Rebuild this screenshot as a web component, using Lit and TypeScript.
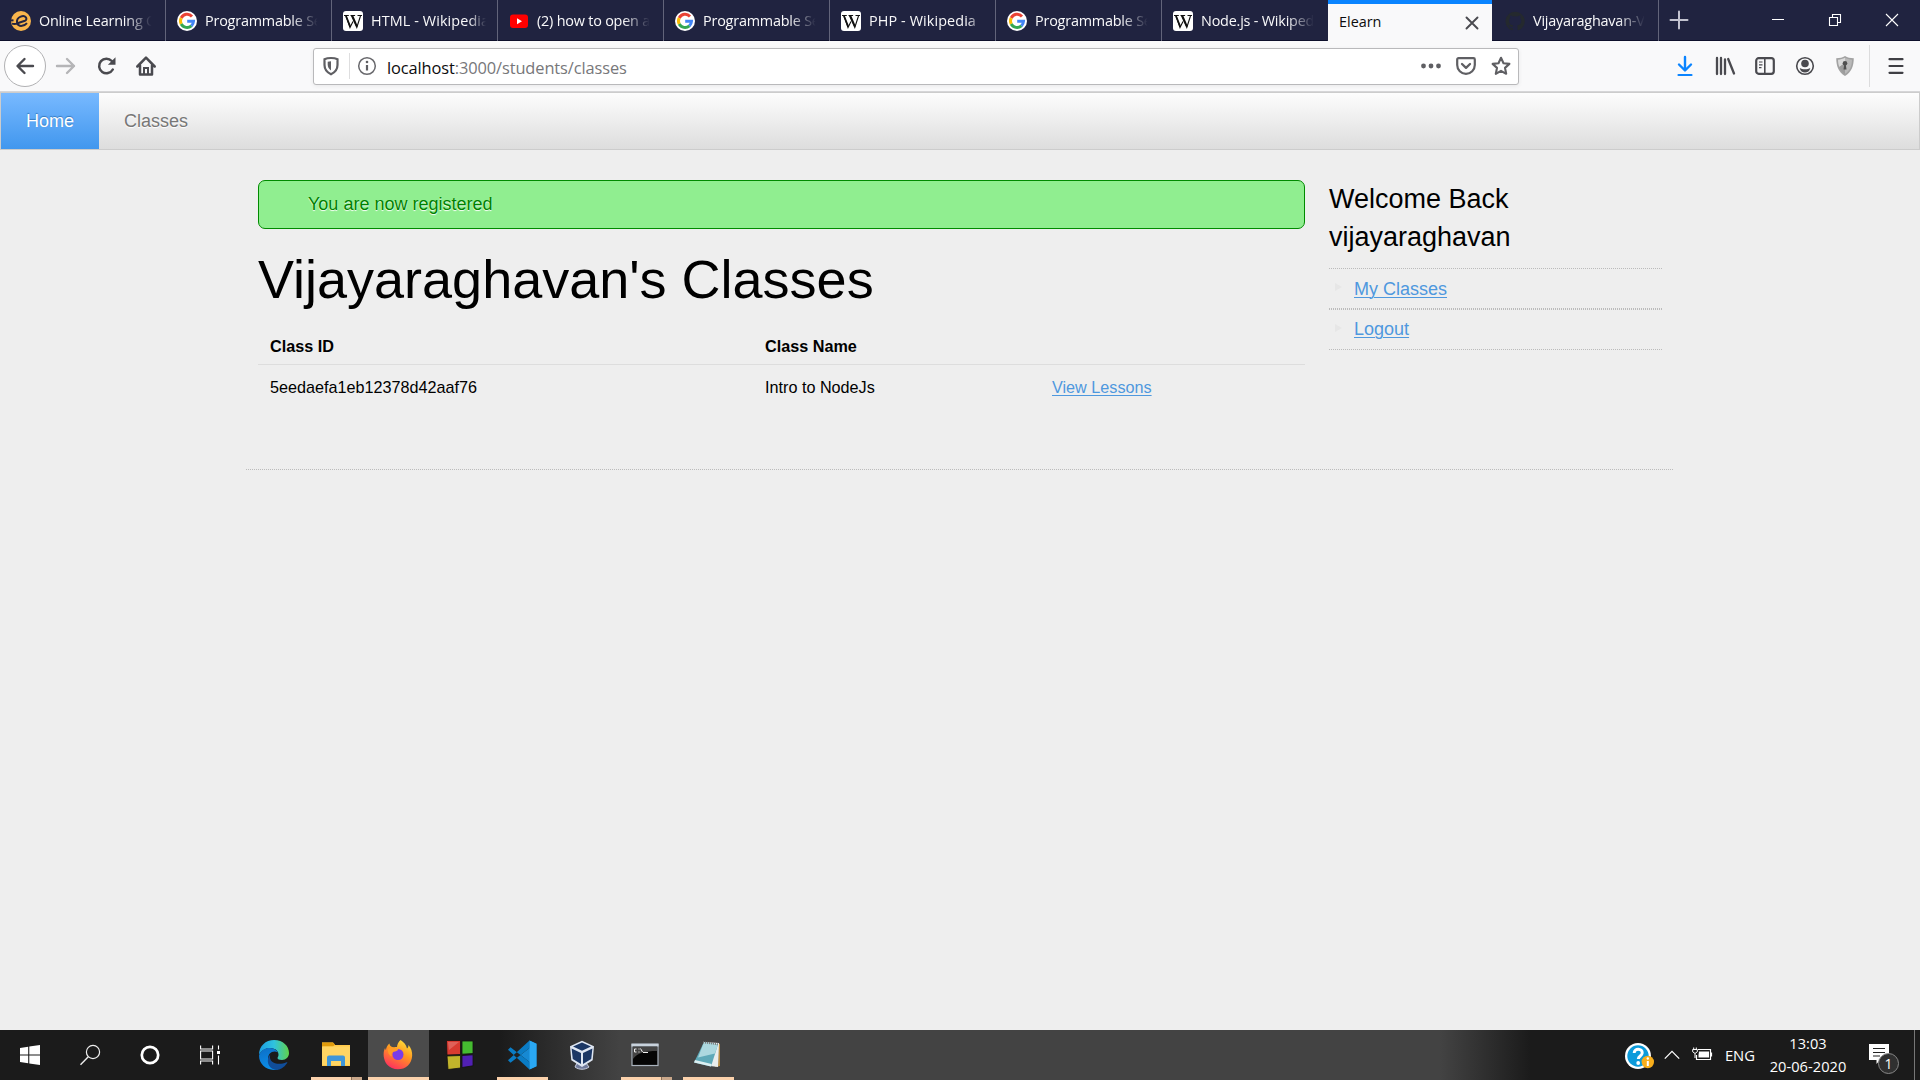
import { LitElement, html, css, svg, nothing } from "lit";
import { customElement } from "lit/decorators.js";

type Tab = { icon: string; label: string; cls?: string };

const tabs: Tab[] = [
  { icon: "edu", label: "Online Learning C" },
  { icon: "google", label: "Programmable Se" },
  { icon: "wiki", label: "HTML - Wikipedia", cls: "wide" },
  { icon: "youtube", label: "(2) how to open a" },
  { icon: "google", label: "Programmable Se" },
  { icon: "wiki", label: "PHP - Wikipedia", cls: "wide" },
  { icon: "google", label: "Programmable Se" },
  { icon: "wiki", label: "Node.js - Wikiped", cls: "before" },
  { icon: "", label: "Elearn", cls: "active" },
  { icon: "github", label: "Vijayaraghavan-V", cls: "after" },
];

const icons: Record<string, unknown> = {
  edu: svg`<circle cx="10" cy="10" r="10" fill="#f9b54c"/><path d="M0 9.600L2.500 9.200M1 12.600c2 .6 3.800.4 5.500-.3l7.500-2.600c1.600-.6 1.700-2.200.9-3.300-1-1.300-3.200-1.600-5.200-.8C7.200 6.600 5.700 8.900 6 11.300c.3 2.600 2.500 3.900 5 3.500 2-.3 3.700-1.200 5-2.700" fill="none" stroke="#23233f" stroke-width="2"/>`,
  google: svg`<circle cx="10" cy="10" r="10" fill="#fff"/><g fill="none" stroke-width="3"><path d="M15 5.400A6.600 6.600 0 0 0 4.200 7" stroke="#ea4335"/><path d="M4.200 7a6.600 6.600 0 0 0 0 6" stroke="#fbbc05"/><path d="M4.200 13A6.600 6.600 0 0 0 14.400 14.800" stroke="#34a853"/><path d="M14.400 14.800a6.500 6.500 0 0 0 2.100-4.500H10.200" stroke="#4285f4"/></g>`,
  wiki: svg`<rect width="20" height="20" rx="3" fill="#fff"/><path d="M1 4.500h4.800M7.500 4.500h4.600M14.500 4.500H19M10 10.500l-3 6L3 5M8.500 4.800l5.300 11.700L17.500 5" fill="none" stroke="#111" stroke-width="1.100"/><path d="M3 5l4.200 10.500M9.500 5l4.500 10.500" stroke="#111" stroke-width="1.800"/>`,
  youtube: svg`<rect x="1" y="3.500" width="18" height="13.500" rx="3" fill="#f00"/><path d="M8 7.300v6l5-3z" fill="#fff"/>`,
  github: svg`<path d="M10 .8a9.500 9.500 0 0 0-3 18.500c.5.1.7-.2.7-.5v-1.700c-2.700.6-3.200-1.200-3.200-1.200-.5-1.100-1.100-1.400-1.100-1.400-.9-.6.1-.6.1-.6 1 .1 1.500 1 1.500 1 .9 1.500 2.300 1.100 2.800.8.100-.6.300-1.100.6-1.300-2.100-.3-4.300-1.100-4.300-4.700 0-1 .4-1.900 1-2.600-.1-.2-.4-1.200.1-2.500 0 0 .8-.3 2.600 1a9 9 0 0 1 4.800 0c1.800-1.300 2.600-1 2.600-1 .5 1.300.2 2.300.1 2.500.6.700 1 1.600 1 2.600 0 3.700-2.200 4.400-4.300 4.700.3.300.6.900.6 1.800v2.600c0 .3.200.6.700.5A9.500 9.500 0 0 0 10 .8z" fill="#24292e"/>`,
  back: svg`<path d="M18 10H3M9.500 3l-7 7 7 7" fill="none" stroke="#4a4a4f" stroke-width="2.400" stroke-linecap="round" stroke-linejoin="round"/>`,
  forward: svg`<path d="M1 10h17M11 3l7 7-7 7" fill="none" stroke="#b5b5b7" stroke-width="2.400" stroke-linecap="round" stroke-linejoin="round"/>`,
  reload: svg`<path d="M16.800 13.500A7.300 7.300 0 1 1 15.800 5" fill="none" stroke="#4a4a4f" stroke-width="2.500" stroke-linecap="round"/><path d="M19.500 1.200v7.600h-7.600z" fill="#4a4a4f"/>`,
  home: svg`<path d="M1.300 10.500L10 1.700l8.700 8.800M4 9.500V18.500h12V9.500" fill="none" stroke="#4a4a4f" stroke-width="2.500" stroke-linecap="round" stroke-linejoin="round"/><path d="M8 18v-6h4v6" fill="none" stroke="#4a4a4f" stroke-width="2"/>`,
  shield: svg`<path d="M10 2c2.500 0 5 .5 6.500 1.200V9c0 4-2.500 7.300-6.500 9.200C6 16.300 3.500 13 3.500 9V3.200C5 2.500 7.500 2 10 2z" fill="none" stroke="#5f5f63" stroke-width="2.200"/><path d="M10 5.200v9.300c-2-1.500-3.300-3.400-3.300-6V5.700z" fill="#5f5f63"/>`,
  info: svg`<circle cx="10" cy="10" r="8.300" fill="none" stroke="#69696d" stroke-width="1.500"/><path d="M10 9v5.500" stroke="#5f5f63" stroke-width="2.200"/><circle cx="10" cy="6" r="1.300" fill="#5f5f63"/>`,
  dots: svg`<g fill="#5f5f63"><circle cx="2.500" cy="10" r="2.400"/><circle cx="10" cy="10" r="2.400"/><circle cx="17.500" cy="10" r="2.400"/></g>`,
  pocket: svg`<path d="M2.500 2.200h15a1.300 1.300 0 0 1 1.300 1.300V9a8.800 8.800 0 0 1-17.600 0V3.500a1.300 1.300 0 0 1 1.300-1.300z" fill="none" stroke="#5f5f63" stroke-width="2.200"/><path d="M6 8l4 3.900L14 8" fill="none" stroke="#5f5f63" stroke-width="2.300" stroke-linecap="round" stroke-linejoin="round"/>`,
  star: svg`<path d="M10 1.800l2.500 5.400 5.900.7-4.400 4 1.200 5.900-5.200-3-5.200 3L6 11.900 1.600 7.900l5.900-.7z" fill="none" stroke="#5f5f63" stroke-width="2.100" stroke-linejoin="round"/>`,
  download: svg`<path d="M10 1v13M4 8.500l6 6 6-6" fill="none" stroke="#0a84ff" stroke-width="2.400" stroke-linecap="round" stroke-linejoin="round"/><path d="M3.500 19h13" stroke="#0a84ff" stroke-width="2.200" stroke-linecap="round"/>`,
  library: svg`<path d="M2 2v16M6 2v16M10 3.500v14.500M13.200 3L19 17.500" fill="none" stroke="#4a4a4f" stroke-width="2.300" stroke-linecap="round"/>`,
  sidebar: svg`<rect x="1.200" y="2.200" width="17.600" height="15.600" rx="2.500" fill="none" stroke="#4a4a4f" stroke-width="2.200"/><path d="M9.800 2v16" stroke="#4a4a4f" stroke-width="1.600"/><path d="M4 6h3.500M4 8.800h3.500M4 11.600h2.500" stroke="#4a4a4f" stroke-width="1.200"/>`,
  account: svg`<circle cx="10" cy="10" r="8.300" fill="none" stroke="#4a4a4f" stroke-width="1.600"/><circle cx="10" cy="7.500" r="3.800" fill="#4a4a4f"/><path d="M4.700 12c1.500 1 3 1.300 5.300 1.300s3.800-.3 5.300-1.300c-.5 3-2.800 4.500-5.300 4.500S5.200 15 4.700 12z" fill="#4a4a4f"/>`,
  guard: svg`<path d="M10 0c2.500 1.500 5 2.200 8.800 2.300-.2 8.500-2.300 13.700-8.800 17.700C3.500 16 1.400 10.800 1.200 2.300 5 2.200 7.500 1.500 10 0z" fill="#a2a2a2"/><path d="M10 1.800c2.200 1.200 4.300 1.700 7 1.900-.3 6.800-2.100 11-7 14.100z" fill="#b9b9b9"/><path d="M10 1.800C7.800 3 5.700 3.500 3 3.700c.1 2.800.5 5.200 1.300 7.200L10 7z" fill="#dadada"/><path d="M4.300 10.900c1 2.900 2.900 5.100 5.700 6.900V7z" fill="#9c9c9c"/><circle cx="10" cy="7.300" r="2.300" fill="#505050"/><path d="M9.200 8.500h1.600l.7 5H8.500z" fill="#505050"/>`,
  menu: svg`<path d="M3.500 3.200h13M3.500 10h13M3.500 16.800h13" stroke="#3f3f44" stroke-width="2.200" stroke-linecap="round"/>`,
  close: svg`<path d="M4.500 4.500l11 11M15.500 4.500l-11 11" stroke="#4a4a4f" stroke-width="1.900" stroke-linecap="round"/>`,
  plus: svg`<path d="M10 1.500v17M1.500 10h17" stroke="#c2c2cf" stroke-width="2" stroke-linecap="round"/>`,
  min: svg`<path d="M4 9.500h12" stroke="#fff" stroke-width="1"/>`,
  restore: svg`<path d="M4.500 7.500h8v8h-8zM7.500 7.500v-3h8v8h-3" fill="none" stroke="#fff" stroke-width="1.100"/>`,
  quit: svg`<path d="M4 4l12 12M16 4L4 16" stroke="#fff" stroke-width="1.100"/>`,
  windows: svg`<path d="M0 3l8.200-1.200v7.700H0zM9.300 1.600L20 0v9.500H9.300zM0 10.600h8.200v7.700L0 17.100zM9.300 10.600H20V20L9.300 18.500z" fill="#fff"/>`,
  search: svg`<circle cx="13" cy="7" r="6.600" fill="none" stroke="#eee" stroke-width="1.200"/><path d="M8.300 11.700L.5 19.700" stroke="#eee" stroke-width="1.400"/>`,
  cortana: svg`<circle cx="10" cy="10" r="8.200" fill="none" stroke="#fff" stroke-width="2.700"/>`,
  tasks: svg`<path d="M.6.500v3.500h12V.5M.6 6h12v8H.6zM.6 19.500V16h12v3.500M18.500.5v4M18.500 10.500v9" fill="none" stroke="#fff" stroke-width="1.100"/><rect x="17" y="6" width="3" height="3" fill="#fff"/>`,
  edge: svg`<defs><linearGradient id="eg" x2="1"><stop stop-color="#1b9de2"/><stop offset=".5" stop-color="#2fc2df"/><stop offset="1" stop-color="#60d34a"/></linearGradient><linearGradient id="eb" x2=".3" y2="1"><stop stop-color="#0d6ec5"/><stop offset="1" stop-color="#0b8de8"/></linearGradient></defs><path d="M0 15C0 6 6.500 0 15.200 0 24 0 30 6 30 13c0 4-3 7-7 7-3 0-4.500-.8-4.500-2 0-.8 1-1.300 1-3.300C19.500 10 15 8 11 8 6 8 2 11 0 15z" fill="url(#eg)"/><path d="M0 15.500C2 10 6.500 7.800 11 8c3.500.1 6.500 1.700 7.800 4.300-5-2.600-10 1.200-9.500 6.200.5 5.500 5 9.500 10 10.800C9 32 0 25 0 15.500z" fill="url(#eb)"/><path d="M11.200 14.500C9 23 19 26 27.500 22.300c1-.4 1 .3.500 1C24 29 19 31 15 29.500c-5.700-2-8.500-9-3.800-15z" fill="#104d99"/>`,
  folder: svg`<path d="M1 5V2.500h11L14 5h15v21H1z" fill="#ffc94a"/><path d="M1 6.500V2.500h11l2 2-2 2z" fill="#e09b0c"/><rect x="1" y="6.500" width="28" height="18.500" rx="1" fill="#ffd563"/><path d="M6 26V17.500a2 2 0 0 1 2-2h14a2 2 0 0 1 2 2V26h-4v-5h-10v5z" fill="#3f96d8"/>`,
  firefox: svg`<defs><linearGradient id="ff" x1=".8" x2=".3" y2="1"><stop stop-color="#ffe63b"/><stop offset=".45" stop-color="#ff9620"/><stop offset="1" stop-color="#ff2d61"/></linearGradient></defs><path d="M17.500 0c5 3.200 6 6.500 6.500 8.500 1.200-.8 1.500-2.300 1.500-3.500C31 11 30 21 25 25.500c-6 5.500-16 5-21-1C.5 20-.5 13 2 8c.5 1 .5 1.700 1 2C3 7.500 4.500 5 6.500 3.500c0 2 1.500 3.500 3.500 3.800 2.200 0 3-.2 4-.2C14 4.500 15.500 2 17.500 0z" fill="url(#ff)"/><circle cx="15" cy="14.500" r="5.500" fill="#7a3ce8"/><path d="M5 9c2-2 5-2 9-.5 2 1 1 2-2 3-3.500.8-4 2.500-3 5-3-1-4.500-4-4-7.500z" fill="#ff9a28"/>`,
  blocks: svg`<g stroke="#111" stroke-width=".8"><path d="M1.500.5h14v14l-13.500.5z" fill="#d83a30"/><path d="M17 1h11v12.500l-11 .7z" fill="#45bb30"/><path d="M2 16l13.500-.5V28L3 29.500z" fill="#c1b42b"/><path d="M17 15.500l11-.7v11L17 27.500z" fill="#5120b4"/></g><path d="M3 2h11L4 10z" fill="#fff" opacity=".2"/>`,
  code: svg`<path d="M22.500.5l7 3.300v22.400l-7 3.300V22l-9-7 9-7z" fill="#1689d3"/><path d="M1 20.200l2.500 2.500L22.500 8V.5zM1 9.800l2.500-2.500L22.500 22v7.500z" fill="#0a7cc5"/><path d="M22.500.5l7 3.300v22.400l-7 3.300z" fill="#2aa8f4"/>`,
  vbox: svg`<path d="M10 23l-2 4c4 3 10 3 14 0l-3-4z" fill="#707b9c" stroke="#c9cfe0"/><path d="M15 .8l12 5.400-1.300 14L15 27 4.300 20.200 3 6.200z" fill="#dfe7f3"/><path d="M15 2.500l9 4-9 4.300-9-4.300zM4.600 8.500l9.400 4.600v11l-8.200-5.200zM25.400 8.500L16 13.100v11l8.200-5.200z" fill="#1b3765"/>`,
  terminal: svg`<rect x="2" y="4" width="26" height="21.500" fill="#050505" stroke="#aab3bd" stroke-width="1.200"/><path d="M1.500 5.200h27" stroke="#c8d2dc" stroke-width="2.600"/><path d="M3 7h24v4C15 11 7 13 3 19z" fill="#444"/><path d="M6.500 9h-2v3h2M8.500 9h1M8.500 12h1M10.500 8.500l2 3.500M13 12.500h5" stroke="#eee" fill="none"/>`,
  notepad: svg`<path d="M25 3l3 1v22l-5 1z" fill="#b48a45"/><path d="M12 2l15 1-1 24-8-1z" fill="#e9eded"/><path d="M12 2l14 2.500-7 22L2 22.500z" fill="#5ea9b8"/><path d="M12 2l14 2.500-3 9-17 4z" fill="#acd8df"/><path d="M2 22.500l17 4 .7-2.500L3 20z" fill="#dbeff2"/><path d="M11 2.300l15 2" stroke="#777" stroke-width="2" stroke-dasharray="1 1"/>`,
  help: svg`<circle cx="13" cy="13" r="13" fill="#fff"/><circle cx="13" cy="13" r="10.700" fill="#0c9bdb"/><path d="M9.200 10c0-5.300 8.300-4.800 8 0-.2 3-3.700 3-3.900 6" fill="none" stroke="#fff" stroke-width="3"/><circle cx="13.200" cy="20" r="1.900" fill="#fff"/><circle cx="22.800" cy="19" r="6.200" fill="#f8ae1b"/><path d="M22.800 18v5" stroke="#fff" stroke-width="2"/><circle cx="22.800" cy="15.500" r="1.200" fill="#fff"/>`,
  up: svg`<path d="M2 14l8-8 8 8" fill="none" stroke="#fff" stroke-width="1.400"/>`,
  battery: svg`<path d="M6 4.500h12.500v10H4.500V10M19.500 7.500v4" fill="none" stroke="#fff" stroke-width="1.200"/><path d="M7 6.500h10v6H6.500V10z" fill="#fff"/><path d="M.7 4.500h4.600v2.300L3 8.500.7 6.800zM1.700 4.500v-2M4.300 4.500v-2M3 8.500v4.500" fill="none" stroke="#fff"/>`,
  action: svg`<path d="M0 0h20v16H11l-3.500 4v-4H0z" fill="#fff"/><path d="M4 4.500h12M4 8.500h12M4 12h7" stroke="#222" stroke-width="1.200"/>`,
};

const icon = (name: string, size = 20, box = 20) =>
  html`<svg class="icon" width=${size} height=${size} viewBox="0 0 ${box} ${box}">${icons[name]}</svg>`;

@customElement("app-root")
export class AppRoot extends LitElement {
  static styles = css`
    :host { display: flex; flex-direction: column; height: 1080px; width: 1920px; overflow: hidden; background: #eee; color: #000; font: 18px/25px "Liberation Sans", Arial, sans-serif; }
    * { box-sizing: border-box; }
    .icon { display: block; flex: none; overflow: visible; }
    .tabs { display: flex; height: 41px; flex: none; background: #202340; border-bottom: 1px solid #0d0f2b; font: 14.5px/41px "Open Sans", "Noto Sans", sans-serif; color: #f9f9fa; }
    .tab { width: 166px; flex: none; height: 41px; display: flex; align-items: center; gap: 8px; padding: 1px 11px 0 11px; border-right: 1px solid #62647a; overflow: hidden; }
    .tab.before { border-color: #202340; }
    .tab.active { background: #f9f9fa; color: #0c0c0d; border-top: 4px solid #0a84ff; border-right: 0; width: 164px; padding-top: 0; padding-right: 10px; line-height: 33px; }
    .tab.after { width: 167px; padding-left: 13px; }
    .label { flex: 1; min-width: 0; white-space: nowrap; overflow: hidden; font-size: 14.4px; line-height: 38px; letter-spacing: -0.2px; -webkit-mask-image: linear-gradient(90deg, #000 75%, transparent 98%); }
    .wide .label { letter-spacing: 0.1px; -webkit-mask-image: linear-gradient(90deg, #000 85%, transparent 100%); }
    .active .label { letter-spacing: 0; line-height: 32px; padding-bottom: 2px; -webkit-mask-image: none; }
    .newtab { padding: 10px; }
    .winctl { margin-left: auto; display: flex; align-items: center; gap: 37px; padding-right: 18px; }
    .toolbar { display: flex; align-items: center; height: 51px; flex: none; background: #f9f9fa; border-bottom: 1px solid #d6d6d8; padding: 0 14px 0 4px; }
    .backbtn { width: 42px; height: 42px; border: 1px solid #b1b1b3; border-radius: 50%; background: #fff; display: grid; place-items: center; }
    .navicons { display: flex; gap: 20px; margin-left: 10px; }
    .url { margin-left: 157px; width: 1206px; height: 37px; border: 1px solid #b9b9bb; border-radius: 3px; background: #fff; box-shadow: 0 1px 4px rgba(0,0,0,.07); display: flex; align-items: center; padding: 0 7px 0 7px; }
    .vr { width: 1px; height: 26px; background: #dededf; margin: 0 7px 0 8px; }
    .addr { margin-left: 10px; font: 16.4px/34px "Open Sans", "Noto Sans", sans-serif; letter-spacing: -0.1px; color: #77777a; white-space: nowrap; padding-top: 3px; }
    .host { color: #0c0c0d; }
    .urlicons { display: flex; gap: 15px; margin-left: auto; }
    .actions { display: flex; align-items: center; gap: 20px; margin-left: auto; }
    .sep { width: 1px; height: 42px; background: #dcdcdd; margin: 0 -4px 0 -6px; }
    .menu { display: flex; height: 58px; flex: none; border: 1px solid #ccc; background: linear-gradient(#fdfdfd, #ddd); }
    .item { padding: 0 25px; line-height: 56px; color: #777; text-shadow: 0 1px 1px #fff; }
    .item.on { width: 98px; padding: 0 0 0 25px; color: #fff; background: linear-gradient(#78b9ff, #4197ee); text-shadow: 0 -1px 1px #3378bd; }
    .page { flex: 1; }
    .grid { width: 1427px; height: 320px; margin-left: 246px; padding: 30px 11px 0 12px; display: flex; gap: 24px; border-bottom: 1px dotted #bbb; }
    .main { width: 1047px; }
    .notice { height: 49px; border: 1px solid #008a00; border-radius: 7px; background: #90ee90; color: #008000; padding: 11px 49px; text-shadow: 0 1px 1px #fff; }
    .title { margin: 13px 0 0; font-size: 54px; line-height: 75px; font-weight: 400; }
    .table { width: 100%; margin-top: 9px; border-collapse: collapse; font-size: 16.2px; line-height: 20px; table-layout: fixed; }
    .table th, .table td { text-align: left; padding: 12px 12px 10px; }
    .table th { border-bottom: 1px solid #ddd; padding: 10px 12px 8px; }
    .c1 { width: 495px; } .c2 { width: 287px; }
    .link { color: #4e98de; text-decoration: underline; text-underline-offset: 2px; text-decoration-thickness: 1px; }
    .side { width: 333px; }
    .welcome { margin: 0 0 12px; font-size: 27px; line-height: 38px; font-weight: 400; }
    .list { list-style: none; margin: 0; padding: 0; }
    .entry { display: flex; align-items: center; height: 41px; border: dotted #bbb; border-width: 1px 0; padding-left: 6px; }
    .entry:first-child { padding-top: 1px; }
    .arrow { width: 0; height: 0; border: solid transparent; border-width: 4px 0 4px 7px; border-left-color: #e6e6e6; margin: -4px 12px 0 0; }
    .taskbar { display: flex; height: 50px; flex: none; color: #fff; font: 15px/23px "Open Sans", "Noto Sans", sans-serif; background: linear-gradient(90deg, #1b1b1b 0 500px, #434343 620px 1440px, #1b1b1b 1530px); }
    .start { display: flex; align-items: center; gap: 40px; padding: 0 0 0 20px; width: 243px; }
    .app { width: 62px; height: 50px; display: flex; justify-content: center; padding-top: 10px; border-bottom: 0 solid #fbd2ac; }
    .run { width: 51px; margin: 0 6px; padding-right: 1px; border-bottom-width: 3px; }
    .stack { border-image: linear-gradient(90deg, #fbd2ac 78%, #8a7059 78% 80%, #c9a78a 80%) 1; border-width: 0 0 3px; border-style: solid; }
    .app.on { width: 61px; padding-right: 2px; background: #4b4b4b; border-bottom-width: 3px; }
    .left { width: 61px; padding-right: 5px; }
    .last { margin-left: 5px; padding-right: 3px; }
    .term { padding-right: 3px; }
    .apps { display: flex; }
    .tray { margin-left: auto; display: flex; align-items: center; height: 50px; }
    .help { padding-top: 3px; }
    .up { margin-left: 10px; } .bat { margin-left: 11px; }
    .lang { margin-left: 13px; font-size: 14.8px; letter-spacing: -0.1px; width: 29px; }
    .clock { width: 80px; margin-left: 14px; text-align: center; font-size: 14.6px; letter-spacing: 0.05px; white-space: nowrap; }
    .center { position: relative; margin-left: 21px; padding-bottom: 2px; }
    .badge { position: absolute; left: 9px; top: 9px; width: 21px; height: 21px; border: 1px solid #888; border-radius: 50%; background: #303030; text-align: center; font-size: 14px; line-height: 19px; }
    .edge { width: 1px; height: 50px; background: #777; margin: 0 5px 0 25px; }
  `;

  render() {
    return html`
      <div class="tabs">
        ${tabs.map((t) => html`<div class="tab ${t.cls ?? ""}">
          ${t.icon ? icon(t.icon) : nothing}<span class="label">${t.label}</span>${t.cls === "active" ? icon("close") : nothing}</div>`)}
        <div class="newtab">${icon("plus")}</div>
        <div class="winctl">${icon("min")}${icon("restore")}${icon("quit")}</div>
      </div>
      <div class="toolbar">
        <div class="backbtn">${icon("back")}</div>
        <div class="navicons">${icon("forward")}${icon("reload")}${icon("home")}</div>
        <div class="url">${icon("shield")}<span class="vr"></span>${icon("info")}
          <span class="addr"><span class="host">localhost</span>:3000/students/classes</span>
          <div class="urlicons">${icon("dots")}${icon("pocket")}${icon("star")}</div>
        </div>
        <div class="actions">
          ${["download", "library", "sidebar", "account", "guard"].map((n) => icon(n))}
          <span class="sep"></span>${icon("menu")}
        </div>
      </div>
      <nav class="menu"><span class="item on">Home</span><span class="item">Classes</span></nav>
      <main class="page">
        <div class="grid">
          <section class="main">
            <div class="notice">You are now registered</div>
            <h1 class="title">Vijayaraghavan's Classes</h1>
            <table class="table">
              <tr><th class="c1">Class ID</th><th class="c2">Class Name</th><th></th></tr>
              <tr><td>5eedaefa1eb12378d42aaf76</td><td>Intro to NodeJs</td><td><a class="link">View Lessons</a></td></tr>
            </table>
          </section>
          <aside class="side">
            <h2 class="welcome">Welcome Back<br />vijayaraghavan</h2>
            <ul class="list">
              ${["My Classes", "Logout"].map((l) => html`<li class="entry"><span class="arrow"></span><a class="link">${l}</a></li>`)}
            </ul>
          </aside>
        </div>
      </main>
      <footer class="taskbar">
        <div class="start">${icon("windows")}${icon("search")}${icon("cortana")}${icon("tasks")}</div>
        <div class="apps">
          ${[["edge", ""], ["folder", "run stack"], ["firefox", "on"], ["blocks", ""], ["code", "run"], ["vbox", "left"], ["terminal", "run stack term"], ["notepad", "run last"]].map(
            ([n, c]) => html`<div class="app ${c}">${icon(n, 30, 30)}</div>`
          )}
        </div>
        <div class="tray">
          <span class="help">${icon("help", 28, 28)}</span>
          <span class="up">${icon("up", 18)}</span>
          <span class="bat">${icon("battery")}</span>
          <span class="lang">ENG</span>
          <div class="clock">13:03<br />20-06-2020</div>
          <div class="center">${icon("action")}<span class="badge">1</span></div>
          <span class="edge"></span>
        </div>
      </footer>`;
  }
}
